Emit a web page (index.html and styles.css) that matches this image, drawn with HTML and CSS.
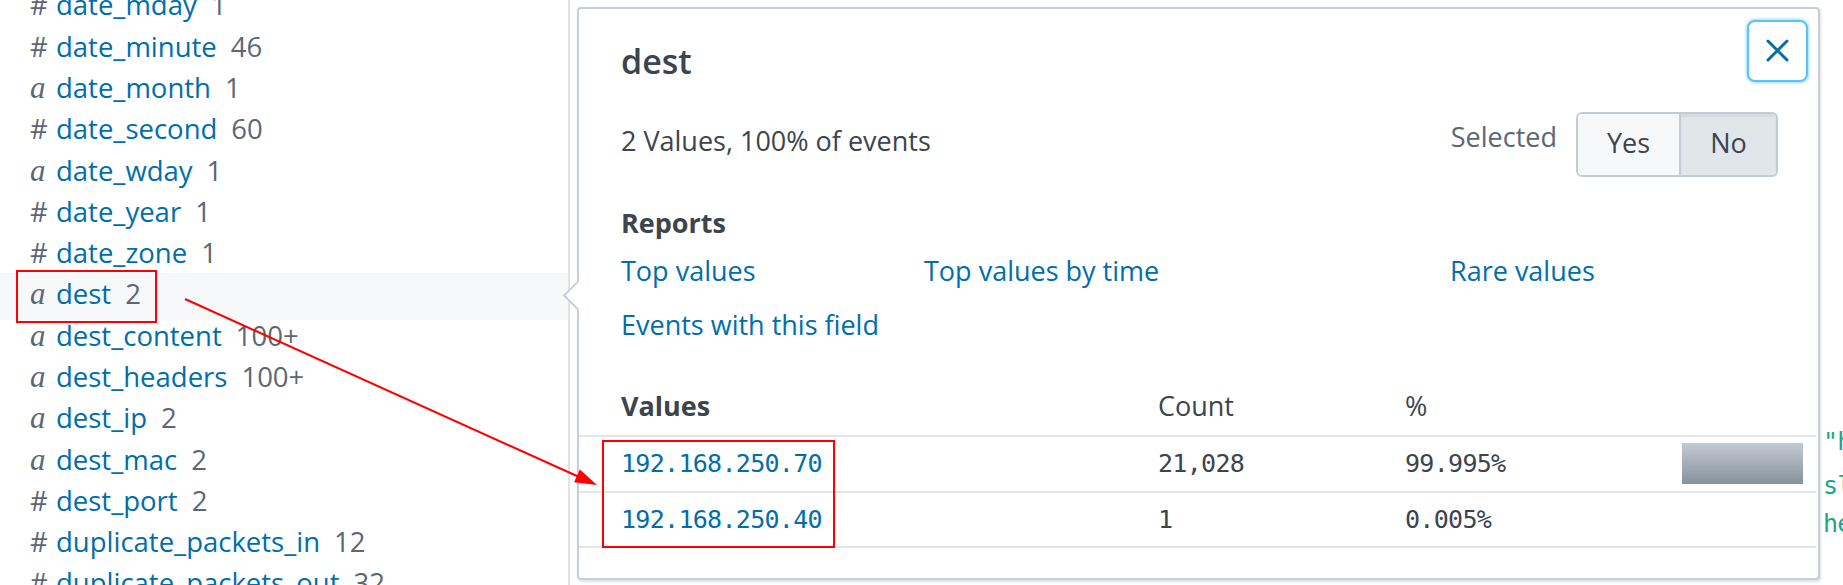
FILE: index.html
```html
<!DOCTYPE html>
<html lang="en">
<head>
<meta charset="utf-8">
<title>dest field summary</title>
<link rel="stylesheet" href="styles.css">
</head>
<body>
<div class="page">
  <aside class="fields">
    <div class="field-list">
      <div class="field"><span class="type num">#</span><span class="name">date_mday</span><span class="count">1</span></div>
      <div class="field"><span class="type num">#</span><span class="name">date_minute</span><span class="count">46</span></div>
      <div class="field"><span class="type str">a</span><span class="name">date_month</span><span class="count">1</span></div>
      <div class="field"><span class="type num">#</span><span class="name">date_second</span><span class="count">60</span></div>
      <div class="field"><span class="type str">a</span><span class="name">date_wday</span><span class="count">1</span></div>
      <div class="field"><span class="type num">#</span><span class="name">date_year</span><span class="count">1</span></div>
      <div class="field"><span class="type num">#</span><span class="name">date_zone</span><span class="count">1</span></div>
      <div class="field active"><span class="type str">a</span><span class="name">dest</span><span class="count">2</span></div>
      <div class="field"><span class="type str">a</span><span class="name">dest_content</span><span class="count">100+</span></div>
      <div class="field"><span class="type str">a</span><span class="name">dest_headers</span><span class="count">100+</span></div>
      <div class="field"><span class="type str">a</span><span class="name">dest_ip</span><span class="count">2</span></div>
      <div class="field"><span class="type str">a</span><span class="name">dest_mac</span><span class="count">2</span></div>
      <div class="field"><span class="type num">#</span><span class="name">dest_port</span><span class="count">2</span></div>
      <div class="field"><span class="type num">#</span><span class="name">duplicate_packets_in</span><span class="count">12</span></div>
      <div class="field"><span class="type num">#</span><span class="name">duplicate_packets_out</span><span class="count">32</span></div>
    </div>
  </aside>
  <main class="events">
    <div class="event-line l1">"http_method": "GET",</div>
    <div class="event-line l2">sleep_time</div>
    <div class="event-line l3">headers</div>
  </main>

  <section class="popover">
    <div class="pop-head">
      <h2 class="pop-title">dest</h2>
      <div class="close-btn">
        <svg width="23" height="23" viewBox="0 0 23 23"><path d="M2 2 L21 21 M21 2 L2 21" stroke="#006eaa" stroke-width="3" stroke-linecap="round" fill="none"/></svg>
      </div>
    </div>
    <div class="pop-summary">
      <div class="values-count">2 Values, 100% of events</div>
      <div class="selected-label">Selected</div>
      <div class="toggle">
        <div class="tog yes">Yes</div>
        <div class="tog no">No</div>
      </div>
    </div>
    <div class="reports-title">Reports</div>
    <div class="report-links">
      <a class="rlink">Top values</a>
      <a class="rlink">Top values by time</a>
      <a class="rlink">Rare values</a>
      <a class="rlink">Events with this field</a>
    </div>
    <div class="vtable">
      <div class="vrow vhead">
        <div class="vc c1 bold">Values</div>
        <div class="vc c2">Count</div>
        <div class="vc c3">%</div>
        <div class="vc c4"></div>
      </div>
      <div class="vrow vbody">
        <div class="vc c1 mono link">192.168.250.70</div>
        <div class="vc c2 mono">21,028</div>
        <div class="vc c3 mono">99.995%</div>
        <div class="vc c4"><div class="bar" style="width:121px"></div></div>
      </div>
      <div class="vrow vbody">
        <div class="vc c1 mono link">192.168.250.40</div>
        <div class="vc c2 mono">1</div>
        <div class="vc c3 mono">0.005%</div>
        <div class="vc c4"></div>
      </div>
    </div>
  </section>

  <svg class="annot" width="1843" height="585" viewBox="0 0 1843 585">
    <rect x="17" y="271" width="139" height="51" fill="none" stroke="#ff0000" stroke-width="2"/>
    <rect x="603" y="441" width="231" height="106" fill="none" stroke="#ff0000" stroke-width="2"/>
    <line x1="185" y1="299" x2="578" y2="476.5" stroke="#ff0000" stroke-width="2"/>
    <polygon points="597,485 579.8,469.6 574.1,482.3" fill="#ff0000"/>
  </svg>
</div>
</body>
</html>
```

FILE: styles.css
```css
html, body {
  margin: 0;
  padding: 0;
  background: #ffffff;
}

body {
  width: 1843px;
  height: 585px;
  overflow: hidden;
  font-family: "Open Sans", "Liberation Sans", sans-serif;
  font-size: 27px;
  color: #3c444d;
}

.page {
  position: relative;
  display: flex;
  width: 1843px;
  height: 585px;
}

/* ---------- field sidebar ---------- */
.fields {
  width: 568px;
  flex: none;
  border-right: 2px solid #dfe3e8;
  overflow: hidden;
}

.field-list {
  margin-top: -15.7px;
}

.field {
  height: 41.3px;
  line-height: 41.3px;
  padding-left: 30px;
  white-space: nowrap;
  font-size: 27.5px;
}

.field.active {
  background: #f7f8fa;
  margin: -0.5px 0 -5.2px;
  padding-top: 0.5px;
  padding-bottom: 5.2px;
}

.type {
  display: inline-block;
  width: 26px;
  line-height: 1;
  color: #5c6773;
}

.type.str {
  font-family: "Liberation Serif", "DejaVu Serif", serif;
  font-style: italic;
  font-size: 31px;
}

.name {
  color: #006eaa;
}

.count {
  margin-left: 14px;
  color: #5c6773;
}

/* ---------- events (background) ---------- */
.events {
  flex: 1;
  padding-left: 1253px;
  overflow: hidden;
  font-family: "DejaVu Sans Mono", "Liberation Mono", monospace;
  font-size: 25px;
  letter-spacing: -0.7px;
  color: #1ea582;
  white-space: nowrap;
}

.event-line {
  line-height: 35px;
}

.event-line.l1 { margin-top: 424px; }
.event-line.l2 { margin-top: 9px; }
.event-line.l3 { margin-top: 3px; }

/* ---------- popover ---------- */
.popover {
  position: absolute;
  left: 577px;
  top: 7px;
  width: 1243px;
  height: 573px;
  box-sizing: border-box;
  border: 2px solid #c8ced6;
  border-radius: 4px;
  background: #ffffff;
  box-shadow: 1px 2px 3px rgba(0, 0, 0, 0.12);
}

.popover::before {
  content: "";
  position: absolute;
  left: -11.6px;
  top: 275.5px;
  width: 21px;
  height: 21px;
  box-sizing: border-box;
  background: #ffffff;
  border-left: 2px solid #c8ced6;
  border-bottom: 2px solid #c8ced6;
  transform: rotate(45deg);
}

.pop-head {
  display: flex;
  justify-content: space-between;
  align-items: flex-start;
  padding: 11px 10px 0 42px;
}

.pop-title {
  margin: 20.5px 0 0;
  font-size: 34px;
  font-weight: 600;
  line-height: 40px;
  color: #3c444d;
}

.close-btn {
  width: 61px;
  height: 62px;
  box-sizing: border-box;
  border: 2px solid #5bc3fa;
  border-radius: 8px;
  box-shadow: 0 0 3px 1px #9adcff;
  display: flex;
  align-items: center;
  justify-content: center;
  background: #ffffff;
}

.close-btn svg {
  margin-top: -1px;
}

.pop-summary {
  display: flex;
  align-items: flex-start;
  margin-top: 29.5px;
  padding: 0 40px 0 42px;
  height: 65px;
}

.values-count {
  flex: 1;
  margin-top: 11px;
  line-height: 36px;
}

.selected-label {
  margin: 7px 19px 0 0;
  line-height: 36px;
  color: #5c6773;
}

.toggle {
  display: flex;
  height: 65px;
  box-sizing: border-box;
  border: 2px solid #c3cbd4;
  border-radius: 6px;
  overflow: hidden;
}

.tog {
  height: 61px;
  line-height: 57px;
  text-align: center;
  box-sizing: border-box;
  color: #3c444d;
}

.tog.yes {
  width: 103px;
  background: #f7f8fa;
  border-right: 2px solid #c3cbd4;
}

.tog.no {
  width: 95px;
  background: #e1e6eb;
  box-shadow: inset 0 3px 2px rgba(0, 0, 0, 0.05);
}

.reports-title {
  margin-top: 25.5px;
  padding-left: 42px;
  font-weight: 700;
  line-height: 42px;
}

.report-links {
  display: grid;
  grid-template-columns: 303px 526px auto;
  padding-left: 42px;
  line-height: 53.5px;
}

.rlink {
  color: #006eaa;
  white-space: nowrap;
}

.vtable {
  margin-top: 34.7px;
  width: 1237px;
}

.vrow {
  display: grid;
  grid-template-columns: 579px 247px 277px 134px;
  border-bottom: 2px solid #e1e6eb;
}

.vhead {
  height: 49.8px;
  line-height: 40px;
}

.vbody {
  height: 53.5px;
  line-height: 53.5px;
}

.vc.c1 {
  padding-left: 42px;
}

.bold {
  font-weight: 700;
}

.mono {
  font-family: "DejaVu Sans Mono", "Liberation Mono", monospace;
  font-size: 25px;
  letter-spacing: -0.7px;
}

.link {
  color: #006eaa;
}

.bar {
  margin-top: 6px;
  height: 41px;
  background: linear-gradient(#c3cad2, #87929d);
}

/* ---------- annotation overlay ---------- */
.annot {
  position: absolute;
  left: 0;
  top: 0;
  pointer-events: none;
}
```
